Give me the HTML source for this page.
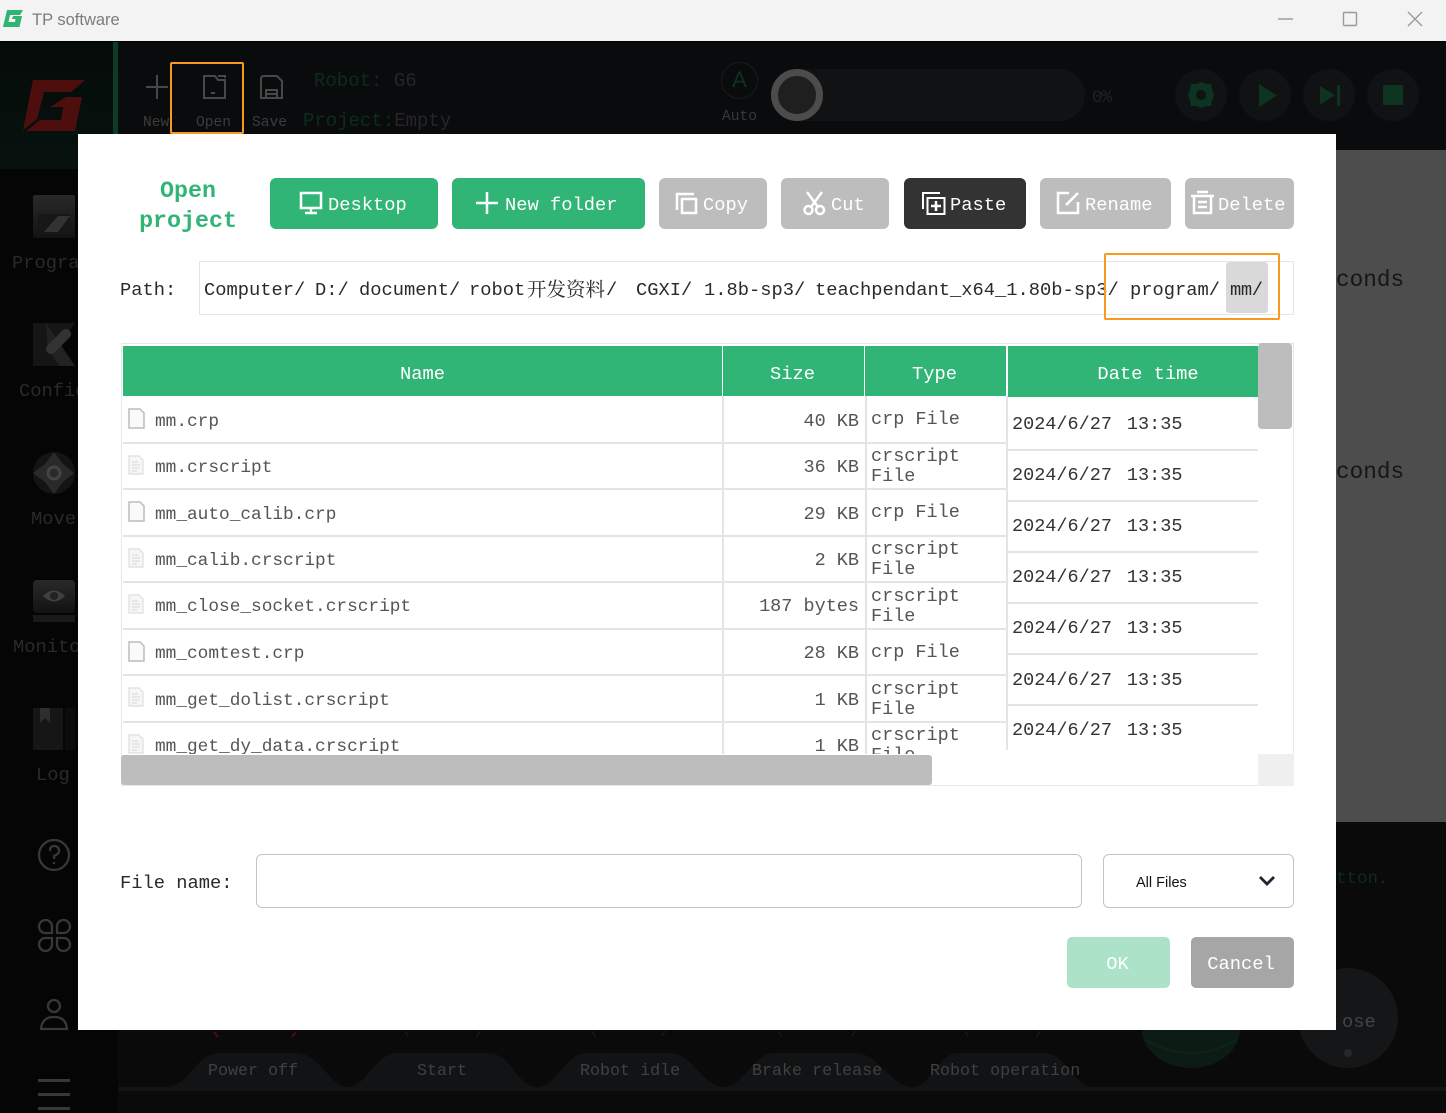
<!DOCTYPE html>
<html><head><meta charset="utf-8"><style>
html,body{margin:0;padding:0;background:#060606}
#p{position:relative;width:1446px;height:1113px;overflow:hidden;background:#060606;font-family:"Liberation Mono","Noto Serif CJK SC",monospace}
.a{position:absolute}
.t{position:absolute;white-space:pre;line-height:24px;height:24px;font-family:"Liberation Mono","Noto Sans CJK SC",monospace}
.l{font-size:18.75px;color:#2a2a2a;margin-top:1px}
.h{font-size:18.75px;color:#fff;text-align:center;margin-top:1px}
.n{font-size:17.8px;color:#555;margin-top:2px}
.z{font-size:18.5px;color:#555;text-align:right;right:587px;margin-top:2px}
.y{font-size:18.5px;color:#555;line-height:20px;height:40px;left:871px;margin-top:2px}
.d{font-size:18.5px;color:#333;left:1012px;margin-top:3px}
.d i{font-style:normal;margin-left:15px}
.b{position:absolute;top:178px;height:51px;border-radius:6px;background:#31b577}
.b.g{background:#bdbdbd}.b.k{background:#333}
.b span{position:absolute;top:15px;white-space:pre;line-height:24px;font-size:18.75px;color:#fff;font-family:"Liberation Mono",monospace}
.b svg{position:absolute;top:12px}
.s{font-size:14.6px;color:#3c3c3c;margin-top:2px}
.m{font-size:18.75px;color:#2a2a2a;margin-top:1px}
.v{position:absolute;height:1.5px;background:#e4e4e4}
.f{position:absolute;left:128px}
.bt{font-size:16.7px;color:#404040;margin-top:1px;top:1059px}
</style></head><body><div id="p">

<!-- title bar -->
<div class="a" style="left:0;top:0;width:1446px;height:41px;background:#f3f3f3"></div>
<svg class="a" style="left:2px;top:9px" width="22" height="19" viewBox="0 0 22 19"><path d="M5 1H21L18 6H8L6.5 13H13L13.5 10H10L11 7H20L17.5 18H1Z" fill="#2fb573"/></svg>
<div class="t" style="left:32px;top:8px;font:16.5px/24px 'Liberation Sans',sans-serif;color:#7c7c7c">TP software</div>
<svg class="a" style="left:1270px;top:4px" width="160" height="30" fill="none" stroke="#9a9a9a" stroke-width="1.4"><path d="M8 15H23"/><rect x="73.500" y="8.500" width="13" height="13" rx="1"/><path d="M138 8L152 22M152 8L138 22"/></svg>

<!-- top bar -->
<div class="a" style="left:0;top:41px;width:1446px;height:110px;background:#0a0b0d;border-top:1px solid #000"></div>
<div class="a" style="left:0;top:42px;width:113px;height:127px;background:linear-gradient(180deg,#050b0a,#07120e)"></div>
<div class="a" style="left:113px;top:42px;width:5px;height:92px;background:#0f3a24"></div>
<div class="a" style="left:0;top:169px;width:118px;height:944px;background:#050505"></div>
<div class="a" style="left:118px;top:822px;width:1328px;height:291px;background:#0a0a0b"></div>
<svg class="a" style="left:0;top:42px" width="113" height="100"><g transform="translate(0,-42)" fill="#4e0e0e"><path d="M33 80H85L71 92H44L37 119L23 130Z"/><path d="M66 97H82L75 131H26L40 120H61L63 107H50Z"/></g></svg>
<svg class="a" style="left:145px;top:74px" width="24" height="26" stroke="#484848" stroke-width="2" fill="none"><path d="M12 1V25M1 13H23"/></svg>
<svg class="a" style="left:203px;top:75px" width="23" height="24" stroke="#484848" stroke-width="2" fill="none"><path d="M1 1H12L15 5H22V23H1ZM8 18H12"/><path d="M15 1H22V3"/></svg>
<svg class="a" style="left:260px;top:75px" width="23" height="24" stroke="#484848" stroke-width="2" fill="none"><path d="M1 4Q1 1 4 1H17L22 6V23H1ZM6 23V15H17V23M7 19H16"/></svg>
<div class="t s" style="left:143px;top:109px;width:26px;overflow:hidden">New</div>
<div class="t s" style="left:196px;top:109px">Open</div>
<div class="t s" style="left:252px;top:109px">Save</div>
<div class="t" style="left:314px;top:69px;font-size:19px;color:#0c2c1c">Robot: <span style="color:#262626">G6</span></div>
<div class="t" style="left:303px;top:109px;font-size:19px;color:#0c2c1c">Project:<span style="color:#262626">Empty</span></div>
<div class="a" style="left:721px;top:62px;width:35px;height:35px;border:1px solid #1a1d1c;border-radius:50%"></div>
<div class="t" style="left:721px;top:68px;width:37px;text-align:center;font:22px/24px 'Liberation Sans',sans-serif;color:#0c3320">A</div>
<div class="t s" style="left:722px;top:103px;color:#383838">Auto</div>
<div class="a" style="left:797px;top:69px;width:288px;height:52px;border-radius:0 26px 26px 0;background:#111214"></div>
<div class="a" style="left:771px;top:69px;width:38px;height:38px;border:7px solid #4c4c4c;border-radius:50%;background:#1f1f1f"></div>
<div class="t" style="left:1092px;top:86px;font-size:17.5px;color:#222;letter-spacing:-1px">0%</div>
<svg class="a" style="left:1175px;top:69px" width="245" height="52">
<g fill="#111214"><circle cx="26" cy="26" r="26"/><circle cx="90" cy="26" r="26"/><circle cx="154" cy="26" r="26"/><circle cx="218" cy="26" r="26"/></g>
<g fill="#0d3321"><path d="M26 13L31 15 36 15 37 20 39 26 37 32 36 37 31 37 26 39 21 37 16 37 15 32 13 26 15 20 16 15 21 15Z"/><path d="M84 15L102 26.500 84 38Z"/><path d="M145 17L160 26 145 36ZM162 16H165V37H162Z"/><rect x="208" y="16" width="20" height="20"/></g>
<circle cx="26" cy="26" r="5" fill="#111214"/></svg>

<!-- grey overlay -->
<div class="a" style="left:1336px;top:150px;width:110px;height:672px;background:#4d4d4d;overflow:hidden">
<div class="t" style="left:0;top:118px;font-size:22.7px;color:#161616">conds</div>
<div class="t" style="left:0;top:310px;font-size:22.7px;color:#161616">conds</div>
</div>
<div class="t" style="left:1336px;top:867px;font-size:17.5px;color:#0c2c1c">tton.</div>

<!-- sidebar -->
<svg class="a" style="left:0;top:0" width="78" height="1113">
<defs><linearGradient id="g1" x1="0" y1="0" x2="0" y2="1"><stop offset="0" stop-color="#292929"/><stop offset="1" stop-color="#131313"/></linearGradient></defs>
<rect x="33" y="195" width="42" height="43" rx="2" fill="url(#g1)"/><rect x="38" y="214" width="32" height="18" fill="#171717"/><path d="M44 232L58 216H70L58 232Z" fill="#333"/>
<path d="M33 323H75L60 344 75 366H33Z" fill="#151515"/><path d="M46 323L75 366H60L48 350Z" fill="#222"/><path d="M51 349L66 334" stroke="#333" stroke-width="10" stroke-linecap="round"/>
<circle cx="54" cy="473" r="21" fill="#141414"/><path d="M54 452L63 464 74 473 63 482 54 494 45 482 33 473 45 464Z" fill="#2a2a2a"/><circle cx="54" cy="473" r="6" fill="none" stroke="#444" stroke-width="3"/>
<rect x="33" y="580" width="42" height="33" rx="4" fill="url(#g1)"/><path d="M43 596Q54 585 65 596Q54 607 43 596Z" fill="#404040"/><circle cx="54" cy="596" r="4" fill="#222"/><rect x="33" y="615" width="42" height="7" fill="#191919"/>
<rect x="33" y="708" width="30" height="42" fill="#161616"/><rect x="65" y="708" width="10" height="42" fill="#0c0c0c"/><path d="M40 708H50V723L45 718 40 723Z" fill="#2e2e2e"/>
<g fill="none" stroke="#383838" stroke-width="2.300"><circle cx="54" cy="855" r="15"/><path d="M50 851Q50 846 54 846 59 846 59 851 59 854 54 856V859"/><path d="M54 862V864"/>
<path d="M52 933H45A6.500 6.500 0 1 1 52 926.500Z"/><path d="M57 933H63.500A6.500 6.500 0 1 0 57 926.500Z"/><path d="M52 938H45A6.500 6.500 0 1 0 52 944.500Z"/><path d="M57 938H63.500A6.500 6.500 0 1 1 57 944.500Z"/>
<circle cx="54" cy="1006" r="6"/><path d="M41 1029H67Q66 1017 54 1017 42 1017 41 1029Z"/></g>
</svg>
<div class="t m" style="left:12px;top:250px">Program</div>
<div class="t m" style="left:19px;top:378px">Config</div>
<div class="t m" style="left:31px;top:506px">Move</div>
<div class="t m" style="left:13px;top:634px">Monitor</div>
<div class="t m" style="left:36px;top:762px">Log</div>
<div class="a" style="left:38px;top:1079px;width:32px;height:2.500px;background:#383838"></div>
<div class="a" style="left:38px;top:1093px;width:32px;height:2.500px;background:#383838"></div>
<div class="a" style="left:38px;top:1107px;width:32px;height:2.500px;background:#383838"></div>

<!-- bottom bar -->
<svg class="a" style="left:0;top:0" width="1446" height="1113">
<path d="M118 1087H165C190 1087 195 1053 220 1053H296C320 1053 330 1087 348 1087 366 1087 376 1053 397 1053H489C510 1053 518 1087 537 1087 556 1087 566 1053 586 1053H670C692 1053 704 1087 723.500 1087 743 1087 754 1053 774 1053H856C878 1053 892 1087 912 1087 932 1087 938 1053 958 1053H1045C1065 1053 1075 1087 1093 1087H1446V1091H118Z" fill="#111315"/>
<path d="M1142 1030H1240C1240 1050 1218 1068 1191 1068 1164 1068 1142 1050 1142 1030Z" fill="#0c1c15"/>
<path d="M1146 1040Q1191 1066 1236 1040" fill="none" stroke="#0e2419" stroke-width="2"/>
<path d="M214 1032L218 1037M296 1032L292 1037" stroke="#4e0e0e" stroke-width="2"/>
<path d="M405 1031L408 1036M480 1031L477 1036M592 1031L595 1036M665 1031L662 1036M778 1031L781 1036M855 1031L852 1036M965 1031L968 1036M1040 1031L1037 1036" stroke="#1a1a1a" stroke-width="1.500"/>
<circle cx="1348" cy="1018" r="50" fill="#151617"/><circle cx="1348" cy="1053" r="4" fill="#262728"/>
</svg>
<div class="t" style="left:1342px;top:1010px;font-size:18.75px;color:#444;width:36px">ose</div>
<div class="t bt" style="left:208px">Power off</div>
<div class="t bt" style="left:417px">Start</div>
<div class="t bt" style="left:580px">Robot idle</div>
<div class="t bt" style="left:752px">Brake release</div>
<div class="t bt" style="left:930px">Robot operation</div>

<!-- dialog -->
<div class="a" style="left:78px;top:134px;width:1258px;height:896px;background:#fff"></div>

<div class="t" style="left:120px;top:179px;width:136px;text-align:center;font-size:23.3px;font-weight:bold;color:#31b577">Open</div>
<div class="t" style="left:120px;top:209px;width:136px;text-align:center;font-size:23.3px;font-weight:bold;color:#31b577">project</div>

<div class="b" style="left:270px;width:168px"><svg style="left:29px" width="26" height="26" fill="none" stroke="#fff" stroke-width="2.500"><rect x="2" y="3" width="20" height="15"/><path d="M12 18V23M6 23H18"/></svg><span style="left:58px">Desktop</span></div>
<div class="b" style="left:452px;width:193px"><svg style="left:23px" width="26" height="26" stroke="#fff" stroke-width="2.500"><path d="M12 2V24M1 13H23"/></svg><span style="left:53px">New folder</span></div>
<div class="b g" style="left:659px;width:108px"><svg style="left:15px" width="26" height="26" fill="none" stroke="#fff" stroke-width="2.500"><path d="M3 20V4H20"/><rect x="8" y="9" width="14" height="14"/></svg><span style="left:44px">Copy</span></div>
<div class="b g" style="left:781px;width:108px"><svg style="left:21px" width="26" height="26" fill="none" stroke="#fff" stroke-width="2.500"><path d="M5 2L16 17M20 2L9 17"/><circle cx="6.500" cy="20" r="4"/><circle cx="18" cy="20" r="4"/></svg><span style="left:50px">Cut</span></div>
<div class="b k" style="left:904px;width:122px"><svg style="left:17px" width="26" height="26" fill="none" stroke="#fff" stroke-width="2"><path d="M2 19V3H19"/><rect x="6.500" y="8" width="17" height="16"/><path d="M15 11V21M10 16H20" stroke-width="2.500"/></svg><span style="left:46px">Paste</span></div>
<div class="b g" style="left:1040px;width:131px"><svg style="left:16px" width="26" height="26" fill="none" stroke="#fff" stroke-width="2.500"><path d="M13 3H2V23H22V12M10 15L22 3"/></svg><span style="left:45px">Rename</span></div>
<div class="b g" style="left:1185px;width:109px"><svg style="left:5px" width="26" height="26" fill="none" stroke="#fff" stroke-width="2.500"><path d="M1 6H24M7 2H18M4 6V23H21V6M8 12H17M8 17H17"/></svg><span style="left:33px">Delete</span></div>

<!-- path -->
<div class="t l" style="left:120px;top:277px">Path:</div>
<div class="a" style="left:199px;top:261px;width:1093px;height:52px;border:1px solid #e5e5e5"></div>
<div class="a" style="left:1226px;top:262px;width:42px;height:51px;background:#d9d9d9;border-radius:3px"></div>
<div class="t l" style="left:204px;top:277px">Computer/</div>
<div class="t l" style="left:315px;top:277px">D:/</div>
<div class="t l" style="left:359px;top:277px">document/</div>
<div class="t l" style="left:469px;top:277px">robot</div>
<div class="t l" style="left:527px;top:275px;font-size:19.5px;font-family:'Noto Serif CJK SC','Liberation Mono',serif">开发资料</div>
<div class="t l" style="left:606px;top:277px">/</div>
<div class="t l" style="left:636px;top:277px">CGXI/</div>
<div class="t l" style="left:704px;top:277px">1.8b-sp3/</div>
<div class="t l" style="left:815px;top:277px">teachpendant_x64_1.80b-sp3/</div>
<div class="t l" style="left:1130px;top:277px">program/</div>
<div class="t l" style="left:1230px;top:277px;letter-spacing:-.4px">mm/</div>
<div class="a" style="left:1104px;top:253px;width:172px;height:63px;border:2px solid #f79a20;border-radius:2px"></div>
<div class="a" style="left:170px;top:62px;width:70px;height:68px;border:2px solid #f79a20;border-radius:2px"></div>

<!-- table -->
<div class="a" style="left:121px;top:343px;width:1171px;height:441px;border:1px solid #e8e8e8"></div>
<div class="a" style="left:123px;top:346px;width:599px;height:50px;background:#31b577"></div>
<div class="a" style="left:723px;top:346px;width:141px;height:50px;background:#31b577"></div>
<div class="a" style="left:865px;top:346px;width:141px;height:50px;background:#31b577"></div>
<div class="a" style="left:1008px;top:346px;width:250px;height:51px;background:#31b577"></div>
<div class="t h" style="left:123px;top:361px;width:599px">Name</div>
<div class="t h" style="left:723px;top:361px;width:139px">Size</div>
<div class="t h" style="left:865px;top:361px;width:139px">Type</div>
<div class="t h" style="left:1008px;top:361px;width:280px">Date time</div>

<div class="v" style="left:123px;top:442px;width:883px"></div>
<div class="v" style="left:123px;top:488px;width:883px"></div>
<div class="v" style="left:123px;top:535px;width:883px"></div>
<div class="v" style="left:123px;top:581px;width:883px"></div>
<div class="v" style="left:123px;top:628px;width:883px"></div>
<div class="v" style="left:123px;top:674px;width:883px"></div>
<div class="v" style="left:123px;top:721px;width:883px"></div>
<div class="v" style="left:1008px;top:449px;width:250px"></div>
<div class="v" style="left:1008px;top:500px;width:250px"></div>
<div class="v" style="left:1008px;top:551px;width:250px"></div>
<div class="v" style="left:1008px;top:602px;width:250px"></div>
<div class="v" style="left:1008px;top:653px;width:250px"></div>
<div class="v" style="left:1008px;top:704px;width:250px"></div>
<div class="a" style="left:722px;top:396px;width:1.500px;height:358px;background:#e4e4e4"></div>
<div class="a" style="left:865px;top:396px;width:1.500px;height:358px;background:#e4e4e4"></div>
<div class="a" style="left:1005.500px;top:396px;width:2px;height:354px;background:#e4e4e4"></div>

<svg class="f" style="top:407px" width="18" height="116" fill="#fafafa" stroke="#bcbcbc" stroke-width="1.500">
<path d="M1 2H12L16 6V21H1Z"/><path d="M1 95H12L16 99V114H1Z"/></svg>
<svg class="f" style="top:640px" width="18" height="24" fill="#fafafa" stroke="#bcbcbc" stroke-width="1.500"><path d="M1 2H12L16 6V21H1Z"/></svg>
<svg class="f" style="top:454px" width="18" height="300" fill="#f6f6f6" stroke="#dedede" stroke-width="1.200">
<g><path d="M1 2H11L15 6V20H1Z"/><path d="M4 8H10M4 11H12M4 14H12M4 17H9" fill="none"/></g>
<g transform="translate(0,93)"><path d="M1 2H11L15 6V20H1Z"/><path d="M4 8H10M4 11H12M4 14H12M4 17H9" fill="none"/></g>
<g transform="translate(0,139)"><path d="M1 2H11L15 6V20H1Z"/><path d="M4 8H10M4 11H12M4 14H12M4 17H9" fill="none"/></g>
<g transform="translate(0,232)"><path d="M1 2H11L15 6V20H1Z"/><path d="M4 8H10M4 11H12M4 14H12M4 17H9" fill="none"/></g>
<g transform="translate(0,279)"><path d="M1 2H11L15 6V20H1Z"/><path d="M4 8H10M4 11H12M4 14H12M4 17H9" fill="none"/></g>
</svg>

<div class="t n" style="left:155px;top:408px">mm.crp</div>
<div class="t n" style="left:155px;top:454px">mm.crscript</div>
<div class="t n" style="left:155px;top:501px">mm_auto_calib.crp</div>
<div class="t n" style="left:155px;top:547px">mm_calib.crscript</div>
<div class="t n" style="left:155px;top:593px">mm_close_socket.crscript</div>
<div class="t n" style="left:155px;top:640px">mm_comtest.crp</div>
<div class="t n" style="left:155px;top:687px">mm_get_dolist.crscript</div>
<div class="t n" style="left:155px;top:733px">mm_get_dy_data.crscript</div>

<div class="t z" style="top:408px">40 KB</div>
<div class="t z" style="top:454px">36 KB</div>
<div class="t z" style="top:501px">29 KB</div>
<div class="t z" style="top:547px">2 KB</div>
<div class="t z" style="top:593px">187 bytes</div>
<div class="t z" style="top:640px">28 KB</div>
<div class="t z" style="top:687px">1 KB</div>
<div class="t z" style="top:733px">1 KB</div>

<div class="t y" style="top:408px">crp File</div>
<div class="t y" style="top:445px">crscript
File</div>
<div class="t y" style="top:501px">crp File</div>
<div class="t y" style="top:538px">crscript
File</div>
<div class="t y" style="top:585px">crscript
File</div>
<div class="t y" style="top:641px">crp File</div>
<div class="t y" style="top:678px">crscript
File</div>
<div class="t y" style="top:724px">crscript
File</div>

<div class="t d" style="top:410px">2024/6/27<i>13:35</i></div>
<div class="t d" style="top:461px">2024/6/27<i>13:35</i></div>
<div class="t d" style="top:512px">2024/6/27<i>13:35</i></div>
<div class="t d" style="top:563px">2024/6/27<i>13:35</i></div>
<div class="t d" style="top:614px">2024/6/27<i>13:35</i></div>
<div class="t d" style="top:666px">2024/6/27<i>13:35</i></div>
<div class="t d" style="top:716px">2024/6/27<i>13:35</i></div>

<!-- masks & scrollbars -->
<div class="a" style="left:123px;top:754px;width:1135px;height:31px;background:#fff"></div>
<div class="a" style="left:121px;top:755px;width:811px;height:30px;background:#bdbdbd;border-radius:3px"></div>
<div class="a" style="left:932px;top:784.500px;width:326px;height:1.500px;background:#e8e8e8"></div>
<div class="a" style="left:1258px;top:754px;width:36px;height:32px;background:#efefef"></div>
<div class="a" style="left:1258px;top:343px;width:34px;height:86px;background:#bdbdbd;border-radius:4px"></div>

<!-- file name -->
<div class="t l" style="left:120px;top:870px">File name:</div>
<div class="a" style="left:256px;top:854px;width:824px;height:52px;border:1px solid #c4c4c4;border-radius:6px"></div>
<div class="a" style="left:1103px;top:854px;width:189px;height:52px;border:1px solid #c4c4c4;border-radius:6px"></div>
<div class="t" style="left:1136px;top:871px;font:14.5px/24px 'Liberation Sans',sans-serif;color:#111">All Files</div>
<svg class="a" style="left:1258px;top:875px" width="18" height="12" fill="none" stroke="#1d2530" stroke-width="2.800"><path d="M2 2L9 9L16 2"/></svg>

<div class="a" style="left:1067px;top:937px;width:103px;height:51px;background:#abe2c8;border-radius:5px"></div>
<div class="a" style="left:1191px;top:937px;width:103px;height:51px;background:#a6a6a6;border-radius:5px"></div>
<div class="t" style="left:1067px;top:952px;width:101px;text-align:center;font-size:18.75px;color:#fff">OK</div>
<div class="t" style="left:1191px;top:952px;width:100px;text-align:center;font-size:18.75px;color:#fff">Cancel</div>

</div></body></html>
